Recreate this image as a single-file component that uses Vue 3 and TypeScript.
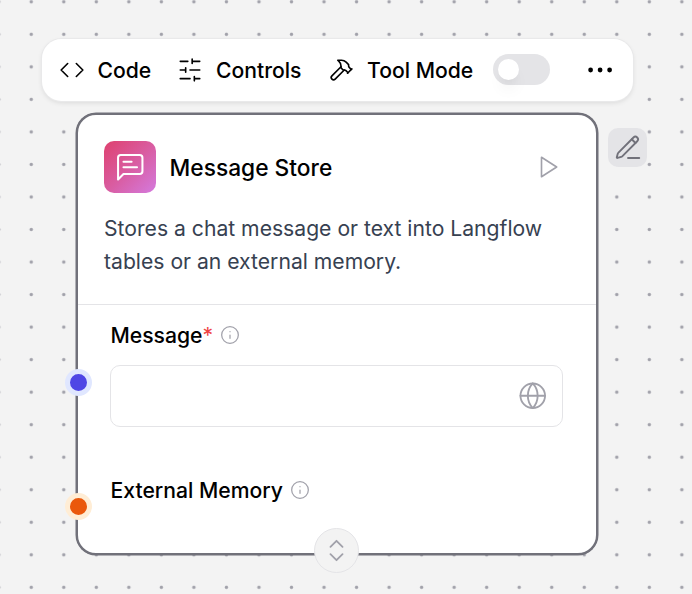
<script setup lang="ts">
import { ref } from 'vue'

interface Field {
  label: string
  required: boolean
  tone: string
  input: boolean
}

const toolMode = ref<boolean>(false)
const message = ref<string>('')
const fields: Field[] = [
  { label: 'Message', required: true, tone: 'indigo', input: true },
  { label: 'External Memory', required: false, tone: 'orange', input: false },
]
</script>

<template>
  <main class="canvas">
    <svg class="grid" width="692" height="594" aria-hidden="true">
      <defs>
        <pattern id="dots" x="-17.53" y="-14.47" width="32.53" height="32.53" patternUnits="userSpaceOnUse">
          <circle cx="16.26" cy="16.26" r="1.7" />
        </pattern>
      </defs>
      <rect width="692" height="594" fill="url(#dots)" />
    </svg>

    <nav class="toolbar">
      <button class="tool code">
        <svg class="icon" viewBox="0 0 24 24"><path d="m16 18 6-6-6-6M8 6l-6 6 6 6" /></svg>
        <span>Code</span>
      </button>
      <button class="tool controls">
        <svg class="icon" viewBox="0 0 24 24"><path d="M21 4h-7M10 4H3M21 12h-9M8 12H3M21 20h-5M12 20H3M14 2v4M8 10v4M16 18v4" /></svg>
        <span>Controls</span>
      </button>
      <button class="tool mode" @click="toolMode = !toolMode">
        <svg class="icon" viewBox="0 0 24 24">
          <path d="m15 12-8.373 8.373a1 1 0 1 1-3-3L12 9" />
          <path d="m18 15 4-4" />
          <path d="m21.5 11.5-1.914-1.914A2 2 0 0 1 19 8.172V7l-2.26-2.26a6 6 0 0 0-4.202-1.756L9 2.96l.92.82A6.18 6.18 0 0 1 12 8.4V10l2 2h1.172a2 2 0 0 1 1.414.586L18.5 14.5" />
        </svg>
        <span>Tool Mode</span>
        <i class="switch" :class="{ on: toolMode }"><i class="thumb"></i></i>
      </button>
      <button class="more">
        <svg width="26" height="26" viewBox="0 0 26 26"><circle cx="3.6" cy="13" r="2.4" /><circle cx="13.1" cy="13" r="2.4" /><circle cx="22.6" cy="13" r="2.4" /></svg>
      </button>
    </nav>

    <div class="node-row">
      <article class="node">
        <header class="head">
          <div class="title-row">
            <div class="badge">
              <svg viewBox="0 0 24 24"><path d="M21 15a2 2 0 0 1-2 2H7l-4 4V5a2 2 0 0 1 2-2h14a2 2 0 0 1 2 2zM13 8H7M17 12H7" /></svg>
            </div>
            <h1>Message Store</h1>
            <svg class="play" viewBox="0 0 24 24"><path d="m6 3 14 9-14 9z" /></svg>
          </div>
          <p>Stores a chat message or text into Langflow<br />tables or an external memory.</p>
        </header>
        <section v-for="field in fields" :key="field.label" class="field" :class="field.tone">
          <i class="handle"></i>
          <div class="label">
            <span>{{ field.label }}</span><b v-if="field.required">*</b>
            <svg class="info" viewBox="0 0 24 24"><circle cx="12" cy="12" r="10" /><path d="M12 16v-4M12 8h.01" /></svg>
          </div>
          <div v-if="field.input" class="box">
            <input v-model="message" type="text" />
            <svg class="globe" viewBox="0 0 24 24"><circle cx="12" cy="12" r="10" /><path d="M12 2a14.5 14.5 0 0 0 0 20 14.5 14.5 0 0 0 0-20M2 12h20" /></svg>
          </div>
        </section>
        <button class="expand">
          <svg viewBox="0 0 24 24"><path d="m7 15 5 5 5-5M7 9l5-5 5 5" /></svg>
        </button>
      </article>
      <button class="edit">
        <svg viewBox="0 0 24 24">
          <path d="M12 20h9" />
          <path d="M16.376 3.622a1 1 0 0 1 3.002 3.002L7.368 18.635a2 2 0 0 1-.855.506l-2.872.838a.5.5 0 0 1-.62-.62l.838-2.872a2 2 0 0 1 .506-.854z" />
          <path d="m15 5 3 3" />
        </svg>
      </button>
    </div>
  </main>
</template>

<style>
body {
  background: #f3f3f3;
}
</style>

<style scoped>
* {
  box-sizing: border-box;
}
.canvas {
  position: relative;
  width: 692px;
  height: 594px;
  padding: 38.5px 0 0 41.5px;
  overflow: hidden;
  background: #f3f3f3;
  color: #000;
  font-family: Inter, sans-serif;
}
.grid {
  position: absolute;
  inset: 0;
  fill: #a1a1aa;
}
svg {
  flex: none;
}
button {
  border: 0;
  padding: 0;
  background: none;
  font: inherit;
  color: inherit;
}
.icon,
.play,
.info,
.globe,
.badge svg,
.expand svg,
.edit svg {
  fill: none;
  stroke: currentColor;
  stroke-width: 1.5;
  stroke-linecap: round;
  stroke-linejoin: round;
}
.toolbar {
  position: relative;
  display: flex;
  align-items: center;
  width: 591.5px;
  height: 62.5px;
  padding-left: 17px;
  border-radius: 19.5px;
  background: #fff;
  box-shadow: 0 0 0 1px #e9e9ea, 0 2px 5px rgba(0, 0, 0, 0.1);
}
.tool {
  display: flex;
  align-items: center;
  font-size: 21.15px;
  font-weight: 500;
  white-space: nowrap;
}
.tool span {
  padding-top: 2px;
}
.tool .icon {
  width: 26px;
  height: 26px;
  margin-right: 13px;
}
.code {
  width: 118.5px;
}
.controls {
  width: 151px;
}
.mode {
  width: 222px;
}
.switch {
  width: 57px;
  height: 31px;
  margin-left: auto;
  padding: 5px;
  border-radius: 16px;
  background: #e4e4e7;
}
.thumb {
  display: block;
  width: 21px;
  height: 21px;
  border-radius: 50%;
  background: #fff;
  box-shadow: 0 12px 16px -3px rgba(0, 0, 0, 0.06), 0 5px 8px -4px rgba(0, 0, 0, 0.06);
}
.switch.on .thumb {
  margin-left: 26px;
}
.more {
  display: flex;
  margin-left: 37.2px;
}
.node-row {
  position: relative;
  display: flex;
  align-items: flex-start;
  gap: 10px;
  padding: 12px 0 0 34.5px;
}
.node {
  position: relative;
  width: 522px;
  height: 442px;
  border: 2px solid #71717a;
  border-radius: 20px;
  background: #fff;
  box-shadow: 0 0 0 0.5px #71717a;
}
.head {
  height: 190px;
  padding: 26px 26px 0;
  border-bottom: 1.5px solid #e4e4e7;
}
.title-row {
  display: flex;
  align-items: center;
  height: 52px;
}
.badge {
  display: grid;
  place-items: center;
  width: 52px;
  height: 52px;
  border-radius: 10px;
  background: linear-gradient(135deg, #de4474 5%, #d95ca0 50%, #d47ade 100%);
  color: #fff;
}
.badge svg {
  width: 32.5px;
  height: 32.5px;
}
h1 {
  flex: 1;
  margin: 1px 0 0 13.5px;
  font-size: 22.75px;
  font-weight: 500;
}
.play {
  width: 26px;
  height: 26px;
  margin-right: 9px;
  color: #a1a1aa;
}
p {
  margin: 18.5px 0 0;
  color: #374151;
  font-size: 21.15px;
  line-height: 33px;
  white-space: nowrap;
}
.field {
  position: relative;
  padding: 16px 32px 0;
}
.indigo {
  height: 155px;
}
.label {
  display: flex;
  align-items: center;
  height: 28px;
  padding-left: 0.5px;
  font-size: 21.15px;
  font-weight: 500;
  white-space: nowrap;
}
.label b {
  color: #ef4444;
  font-weight: 400;
}
.info {
  width: 20px;
  height: 20px;
  margin-left: 7.3px;
  color: #a1a1aa;
}
.box {
  display: flex;
  align-items: center;
  height: 62px;
  margin-top: 15.5px;
  padding: 0 15px;
  border: 1.5px solid #e4e4e7;
  border-radius: 10px;
  width: 453px;
}
.box input {
  flex: 1;
  min-width: 0;
  border: 0;
  outline: 0;
  background: none;
  font: 21px Inter, sans-serif;
}
.globe {
  width: 29.5px;
  height: 29.5px;
  color: #a1a1aa;
}
.handle {
  position: absolute;
  left: -13px;
  top: 64px;
  width: 27px;
  height: 27px;
  border: 5px solid #e0e7ff;
  border-radius: 50%;
  background: #4f46e5;
}
.orange .handle {
  top: 32.5px;
  border-color: #ffedd5;
  background: #ea580c;
}
.expand {
  position: absolute;
  left: 236px;
  bottom: -20px;
  display: grid;
  place-items: center;
  width: 45px;
  height: 45px;
  border: 1.5px solid #e4e4e7;
  border-radius: 50%;
  background: #f3f3f3;
  color: #a1a1aa;
}
.expand svg {
  width: 29px;
  height: 29px;
}
.edit {
  display: grid;
  place-items: center;
  width: 39px;
  height: 39px;
  margin-top: 15px;
  border-radius: 10px;
  background: #e4e4e7;
  color: #71717a;
}
.edit svg {
  width: 30px;
  height: 30px;
}
</style>
